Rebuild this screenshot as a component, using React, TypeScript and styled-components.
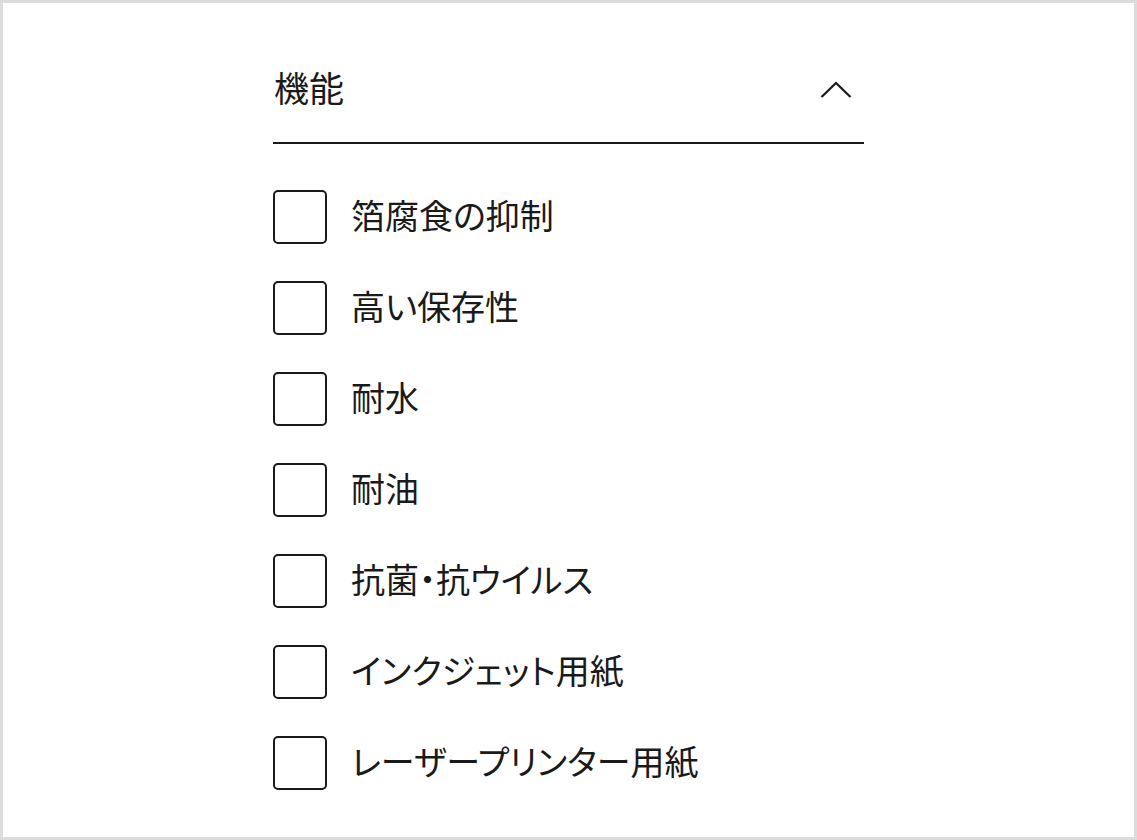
import React from 'react';
import styled, { createGlobalStyle } from 'styled-components';

const GlobalStyle = createGlobalStyle`
  html, body {
    margin: 0;
    padding: 0;
    background: #ffffff;
  }
  body {
    font-family: "Noto Sans CJK JP", "Noto Sans", sans-serif;
    color: #1a1a1a;
    font-feature-settings: "palt";
  }
`;

const options = [
  '箔腐食の抑制',
  '高い保存性',
  '耐水',
  '耐油',
  '抗菌・抗ウイルス',
  'インクジェット用紙',
  'レーザープリンター用紙',
];

function App() {
  return (
    <>
      <GlobalStyle />
      <Frame>
        <Panel>
          <Header>
            <Title>機能</Title>
            <Chevron width="32" height="18" viewBox="0 0 32 18" aria-hidden>
              <path d="M1.5 16 L16 2 L30.5 16" />
            </Chevron>
          </Header>

          <List>
            {options.map((label) => (
              <Row key={label}>
                <Box />
                <Label>{label}</Label>
              </Row>
            ))}
          </List>
        </Panel>
      </Frame>
    </>
  );
}

export default App;

const Frame = styled.div`
  box-sizing: border-box;
  height: 840px;
  border: 3px solid #dcdcdc;
  background: #ffffff;
`;

const Panel = styled.div`
  width: 591px;
  margin: 0 auto;
  padding-top: 62px;
`;

const Header = styled.div`
  display: flex;
  align-items: center;
  justify-content: space-between;
  padding-bottom: 27px;
  border-bottom: 2px solid #1a1a1a;
`;

const Title = styled.h2`
  margin: 0 0 0 1px;
  padding-bottom: 6px;
  height: 44px;
  font-size: 35px;
  font-weight: 400;
  line-height: 44px;
`;

const Chevron = styled.svg`
  margin-right: 12px;
  fill: none;
  stroke: #1a1a1a;
  stroke-width: 2.2;
`;

const List = styled.ul`
  list-style: none;
  margin: 46px 0 0;
  padding: 0;
  display: flex;
  flex-direction: column;
  gap: 37px;
`;

const Row = styled.li`
  display: flex;
  align-items: center;
  gap: 24px;
  height: 54px;
`;

const Box = styled.span`
  box-sizing: border-box;
  width: 54px;
  height: 54px;
  flex: none;
  border: 2px solid #1a1a1a;
  border-radius: 5px;
`;

const Label = styled.span`
  font-size: 34px;
  line-height: 1;
  padding-bottom: 5px;
`;
